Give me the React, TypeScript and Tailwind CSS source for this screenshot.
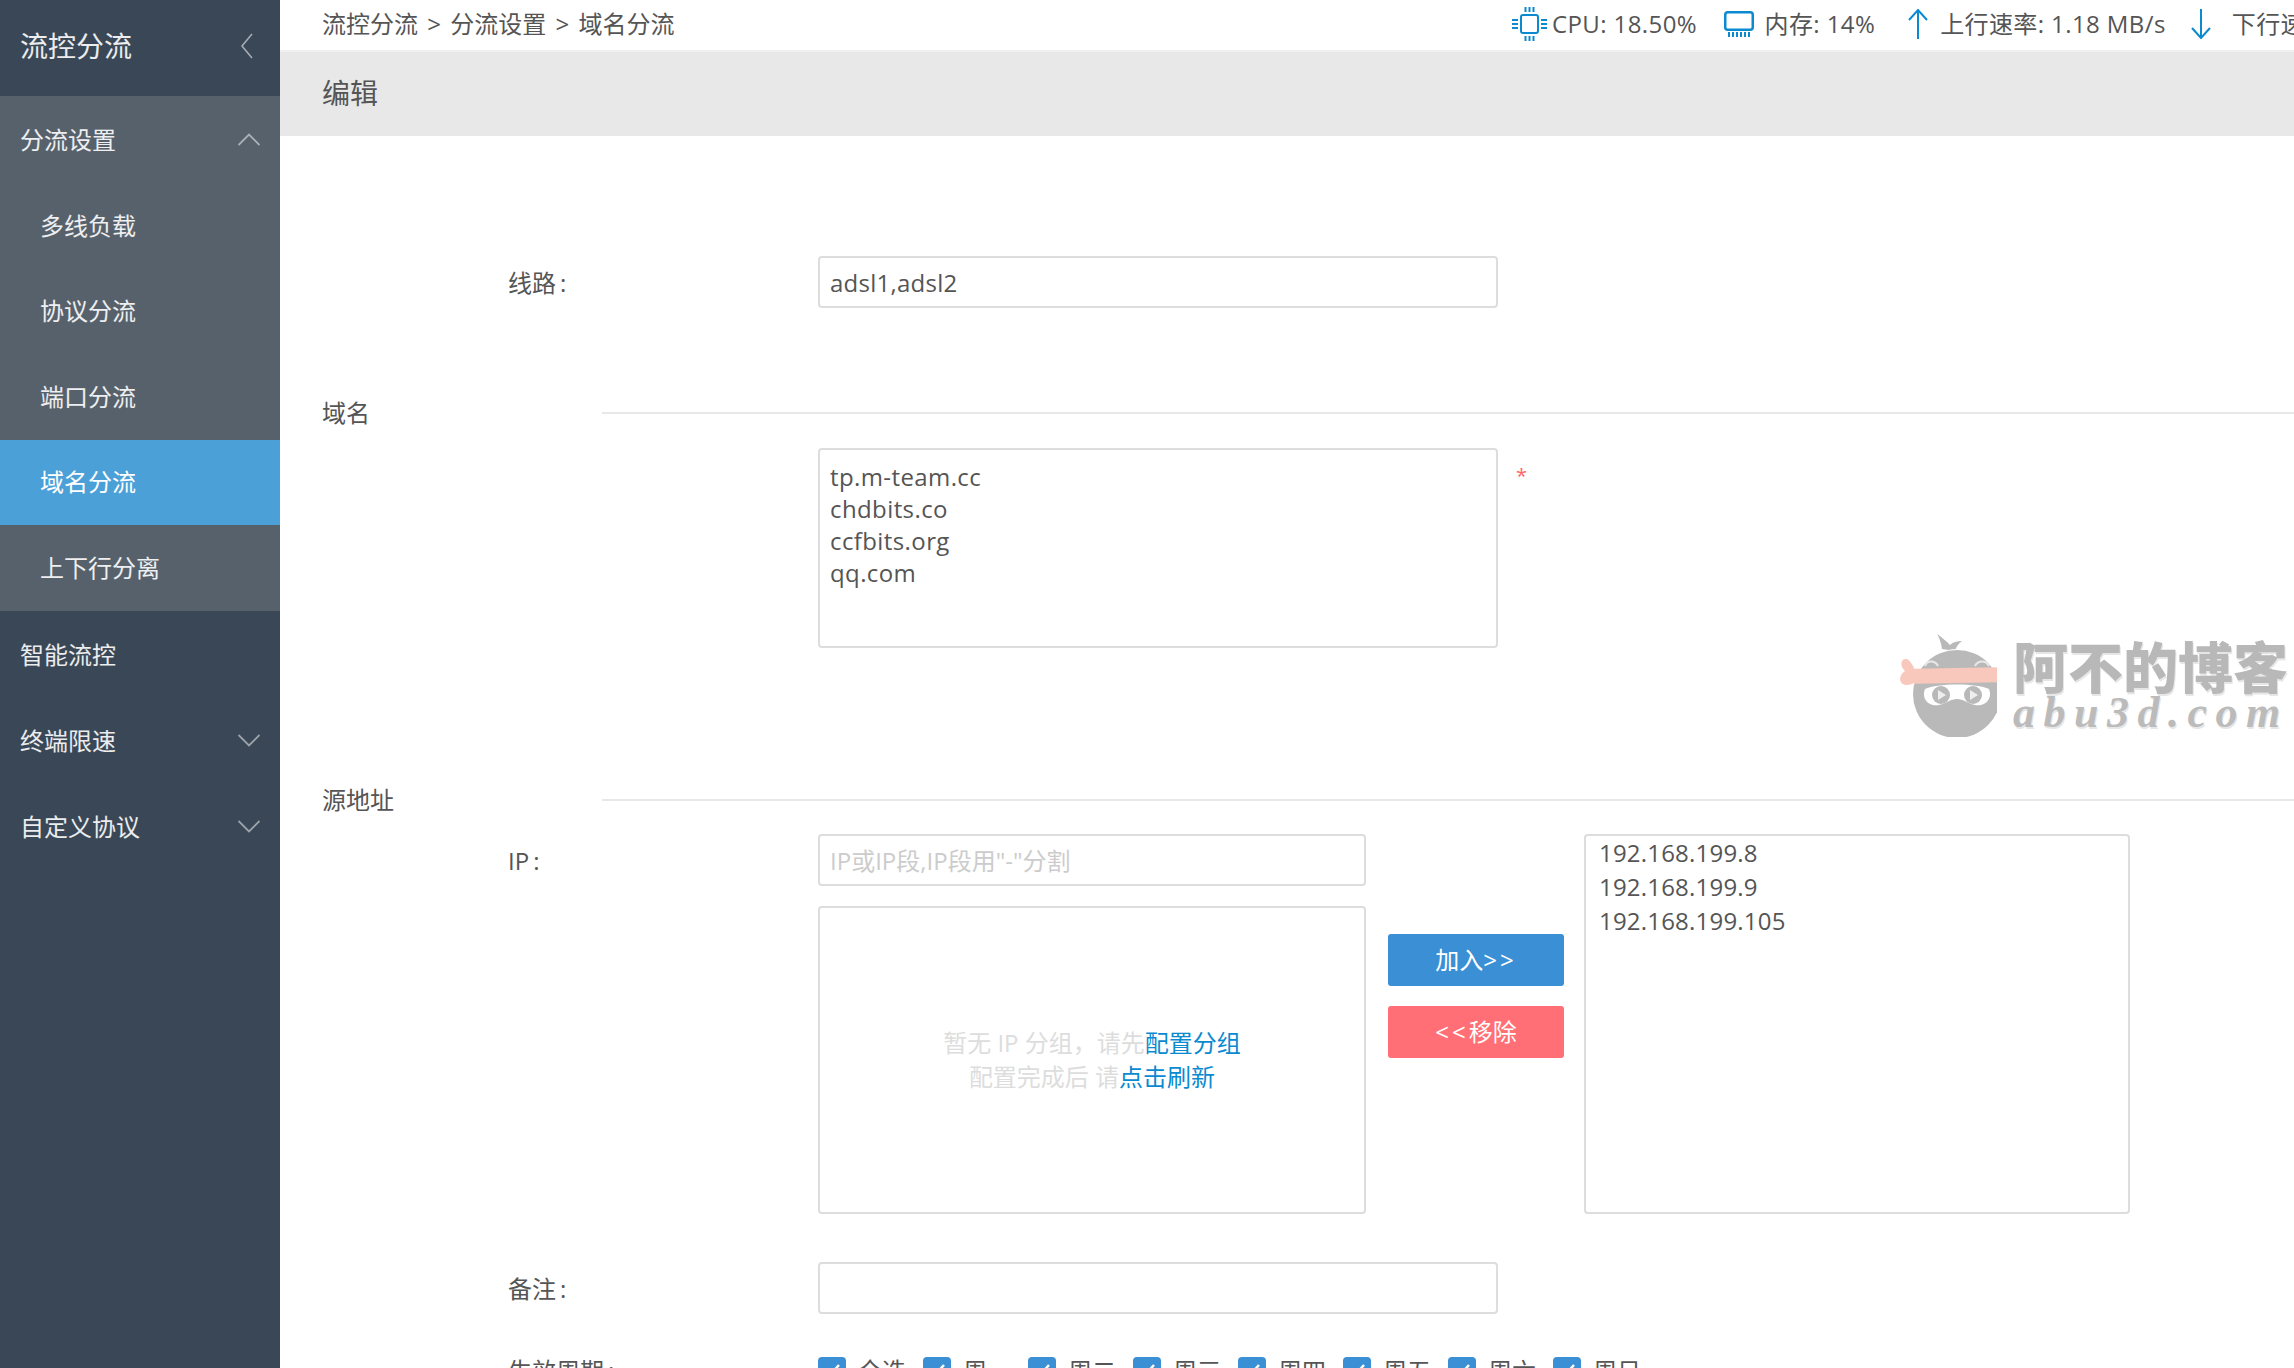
const subItems = ['多线负载', '协议分流', '端口分流', '域名分流', '上下行分离']
const weekdays = ['全选', '周一', '周二', '周三', '周四', '周五', '周六', '周日']
const ips = ['192.168.199.8', '192.168.199.9', '192.168.199.105']

function Chevron({ dir }: { dir: 'up' | 'down' | 'left' }) {
  if (dir === 'left') {
    return (
      <svg width="14" height="26" viewBox="0 0 14 26" fill="none" stroke="#fff" strokeOpacity="0.55" strokeWidth="1.6">
        <path d="M12 1 L2 13 L12 25" />
      </svg>
    )
  }
  return (
    <svg width="22" height="13" viewBox="0 0 22 13" fill="none" stroke="#fff" strokeOpacity="0.5" strokeWidth="1.8">
      <path d={dir === 'up' ? 'M0.5 12 L11 1.5 L21.5 12' : 'M0.5 1 L11 11.5 L21.5 1'} />
    </svg>
  )
}

function CpuIcon() {
  return (
    <svg width="35" height="34" viewBox="0 0 35 34" fill="none" stroke="#0a8ad0" strokeWidth="2">
      <rect x="9" y="8" width="17" height="18" rx="2" />
      <path d="M13.500 0 V5 M17.500 0 V5 M21.500 0 V5 M13.500 29 V34 M17.500 29 V34 M21.500 29 V34 M0 13 H6 M0 17 H6 M0 21 H6 M29 13 H35 M29 17 H35 M29 21 H35" />
    </svg>
  )
}

function MemoryIcon() {
  return (
    <svg width="30" height="26" viewBox="0 0 30 26" fill="none" stroke="#0a8ad0">
      <rect x="1.250" y="1.250" width="27.500" height="17.500" rx="2.500" strokeWidth="2.500" />
      <path strokeWidth="2" d="M5 21 V26 M9 21 V26 M13 21 V26 M17 21 V26 M21 21 V26 M25 21 V26" />
    </svg>
  )
}

function Arrow({ dir }: { dir: 'up' | 'down' }) {
  return (
    <svg width="20" height="30" viewBox="0 0 20 30" fill="none" stroke="#0a8ad0" strokeWidth="2">
      <path d={dir === 'up' ? 'M10 1 V30 M1 11 L10 1 L19 11' : 'M10 0 V29 M1 19 L10 29 L19 19'} />
    </svg>
  )
}

function Stat({ icon, text, className }: { icon: React.ReactNode; text: string; className: string }) {
  return (
    <div className={`flex shrink-0 items-center whitespace-nowrap tracking-[0.4px] ${className}`}>
      {icon}
      <span>{text}</span>
    </div>
  )
}

function SectionTitle({ title, className }: { title: string; className: string }) {
  return (
    <div className={`flex h-[34px] items-center pl-[42px] ${className}`}>
      <span className="w-[280px] shrink-0">{title}</span>
      <div className="h-[2px] flex-1 bg-[#e8e8e8]" />
    </div>
  )
}

function Label({ text }: { text: string }) {
  return (
    <div className="h-[52px] w-[538px] shrink-0 pl-[228px] leading-[54px]">
      {text}
      <span className="ml-[4px]">:</span>
    </div>
  )
}

function Watermark() {
  return (
    <div className="pointer-events-none absolute left-[1897px] top-[633px] h-[104px] w-[388px] bg-white/60">
      <svg className="absolute left-0 top-0" width="100" height="104" viewBox="0 0 100 104">
        <path d="M45 16 C44 10 43 6 40 1 C46 5 50 9 53 12 C56 9 60 8 65 8 C61 11 59 14 58 18 Z" fill="#b9b9b9" />
        <circle cx="60" cy="62" r="46" fill="#fff" />
        <circle cx="60" cy="61" r="44" fill="#b9b9b9" />
        <path d="M28 33 C30 27 38 27 41 33 M78 33 C81 27 89 27 92 33" fill="none" stroke="#e8e8e8" strokeWidth="2" />
        <path d="M21 44 C18 36 14 28 10 26 C4 25 2 32 8 38 C2 42 1 50 8 52 C14 52 18 50 21 48 Z" fill="#f8c8bc" />
        <rect x="18" y="35" width="84" height="15" fill="#f8c8bc" transform="rotate(-1 60 42)" />
        <path d="M28 56 C40 50 80 50 92 56 C96 66 88 74 78 72 C70 70 66 66 60 66 C54 66 50 70 42 72 C32 74 24 66 28 56 Z" fill="#fff" />
        <circle cx="44" cy="62" r="9" fill="#b9b9b9" />
        <circle cx="76" cy="62" r="9" fill="#b9b9b9" />
        <path d="M41 57 L49 62 L41 67 Z M73 57 L81 62 L73 67 Z" fill="#eee" />
      </svg>
      <div className="absolute left-[116px] top-[3px] whitespace-nowrap text-[55px] leading-[62px] font-black text-[#b8b8b8] [text-shadow:1px_2px_0_#e6e6e6]">
        阿不的博客
      </div>
      <div className="absolute left-[116px] top-[54px] whitespace-nowrap font-['Liberation_Serif',serif] text-[44px] leading-[52px] font-bold tracking-[8.500px] text-[#bbbbbb] italic [text-shadow:1px_2px_0_#e6e6e6]">
        abu3d.com
      </div>
    </div>
  )
}

export default function App() {
  return (
    <div className="relative flex h-screen overflow-hidden bg-white font-['Open_Sans','Noto_Sans_CJK_SC',sans-serif] text-[24px] text-[#555]">
      <aside className="w-[280px] shrink-0 bg-[#3a4756] text-white/90">
        <div className="flex h-[96px] items-center justify-between pb-[4px] pl-[20px] pr-[26px] text-[28px]">
          <span>流控分流</span>
          <Chevron dir="left" />
        </div>
        <div className="bg-[#57616c]">
          <div className="flex h-[87px] items-center justify-between pl-[20px] pr-[20px]">
            <span>分流设置</span>
            <Chevron dir="up" />
          </div>
          {subItems.map((item) => (
            <div
              key={item}
              className={`flex h-[85.5px] items-center pl-[40px] ${item === '域名分流' ? 'bg-[#4ca0d8] text-white' : ''}`}
            >
              {item}
            </div>
          ))}
        </div>
        <div className="flex h-[86px] items-center pl-[20px] pt-[2px]">智能流控</div>
        <div className="flex h-[86px] items-center justify-between pl-[20px] pr-[20px] pt-[2px]">
          <span>终端限速</span>
          <Chevron dir="down" />
        </div>
        <div className="flex h-[86px] items-center justify-between pl-[20px] pr-[20px] pt-[2px]">
          <span>自定义协议</span>
          <Chevron dir="down" />
        </div>
      </aside>

      <main className="min-w-0 flex-1">
        <header className="flex h-[52px] items-center overflow-hidden border-b-2 border-[#f0f0f0] pb-[2px]">
          <div className="w-[1232px] shrink-0 whitespace-nowrap pl-[42px]">
            流控分流<span className="mx-[3px]"> &gt; </span>分流设置<span className="mx-[3px]"> &gt; </span>域名分流
          </div>
          <Stat icon={<CpuIcon />} text="CPU: 18.50%" className="mr-[26.500px] gap-[5px]" />
          <Stat icon={<MemoryIcon />} text="内存: 14%" className="mr-[33px] gap-[11px]" />
          <Stat icon={<Arrow dir="up" />} text="上行速率: 1.18 MB/s" className="mr-[25px] gap-[12px]" />
          <Stat icon={<Arrow dir="down" />} text="下行速率: 2.36 MB/s" className="gap-[21px]" />
        </header>

        <div className="flex h-[84px] items-center bg-[#e8e8e8] pb-[2px] pl-[42px] text-[28px]">编辑</div>

        <div className="mt-[120px] flex">
          <Label text="线路" />
          <input
            readOnly
            value="adsl1,adsl2"
            className="h-[52px] w-[680px] rounded border-2 border-[#ddd] px-[10px] tracking-[0.25px] outline-none"
          />
        </div>

        <SectionTitle title="域名" className="mt-[88px]" />
        <div className="mt-[18px] flex">
          <div className="w-[538px] shrink-0" />
          <textarea
            readOnly
            value={'tp.m-team.cc\nchdbits.co\nccfbits.org\nqq.com'}
            className="h-[200px] w-[680px] resize-none rounded border-2 border-[#ddd] px-[10px] py-[11px] leading-[32px] tracking-[0.4px] outline-none"
          />
          <span className="ml-[18px] mt-[16px] text-[20px] leading-[24px] text-[#f66]">*</span>
        </div>

        <SectionTitle title="源地址" className="mt-[135px]" />
        <div className="mt-[17px] flex">
          <Label text="IP" />
          <div className="w-[548px] shrink-0">
            <input
              readOnly
              placeholder={'IP或IP段,IP段用"-"分割'}
              className="h-[52px] w-full rounded border-2 border-[#ddd] px-[10px] outline-none placeholder:text-[#ccc]"
            />
            <div className="mt-[20px] flex h-[308px] flex-col items-center justify-center rounded border-2 border-[#ddd] leading-[34px] text-[#ddd]">
              <div>
                暂无 IP 分组，请先<span className="text-[#0a8ad0]">配置分组</span>
              </div>
              <div>
                配置完成后 请<span className="text-[#0a8ad0]">点击刷新</span>
              </div>
            </div>
          </div>
          <div className="ml-[22px] mt-[100px] flex w-[176px] shrink-0 flex-col gap-[20px] text-white">
            <button className="h-[52px] rounded-[3px] bg-[#3b8fd5]">
              加入<span className="tracking-[3px]">&gt;&gt;</span>
            </button>
            <button className="h-[52px] rounded-[3px] bg-[#ff6f75]">
              <span className="tracking-[3px]">&lt;&lt;</span>移除
            </button>
          </div>
          <div className="ml-[20px] h-[380px] w-[546px] shrink-0 rounded border-2 border-[#ddd] px-[13px] leading-[34px] tracking-[0.2px]">
            {ips.map((ip) => (
              <div key={ip}>{ip}</div>
            ))}
          </div>
        </div>

        <div className="mt-[48px] flex">
          <Label text="备注" />
          <input readOnly className="h-[52px] w-[680px] rounded border-2 border-[#ddd] px-[10px] outline-none" />
        </div>

        <div className="mt-[42px] flex">
          <div className="w-[538px] shrink-0 pl-[228px] leading-[30px]">
            生效周期<span className="ml-[4px]">:</span>
          </div>
          <div className="flex gap-[17px]">
            {weekdays.map((day) => (
              <label key={day} className="flex items-center gap-[12px] leading-[30px]">
                <span className="flex h-[28px] w-[28px] items-center justify-center rounded bg-[#3b8fd5]">
                  <svg className="-translate-y-[1px]" width="18" height="14" viewBox="0 0 18 14" fill="none" stroke="#fff" strokeWidth="2.500">
                    <path d="M2 7 L7 12 L16 2" />
                  </svg>
                </span>
                {day}
              </label>
            ))}
          </div>
        </div>
      </main>

      <Watermark />
    </div>
  )
}
